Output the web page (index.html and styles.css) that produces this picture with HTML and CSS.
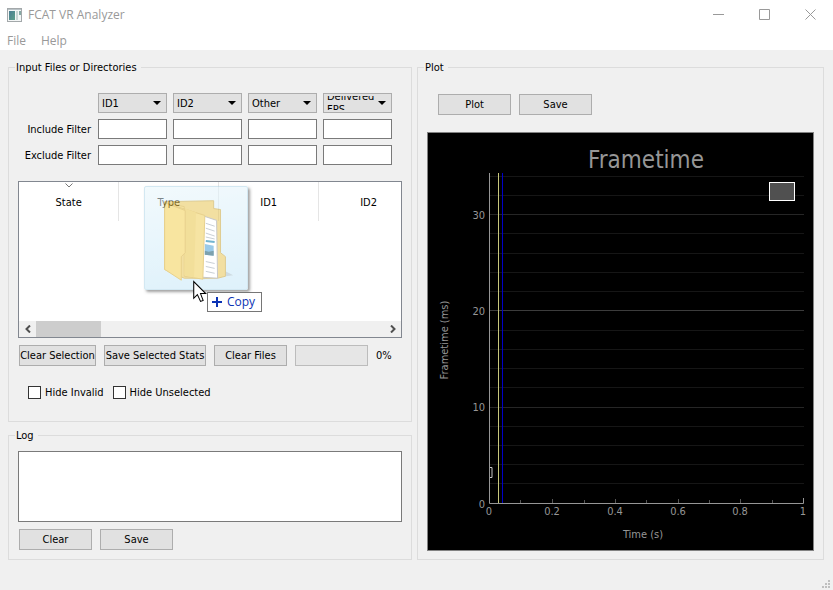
FILE: index.html
```html
<!DOCTYPE html>
<html lang="en">
<head>
<meta charset="utf-8">
<title>FCAT VR Analyzer</title>
<link rel="stylesheet" href="styles.css">
</head>
<body>
<header class="titlebar">
  <svg class="app-icon" width="15" height="14" viewBox="0 0 15 14" aria-hidden="true">
    <defs><linearGradient id="app" x1="0" y1="0" x2="1" y2="1"><stop offset="0" stop-color="#4a7d92"/><stop offset="1" stop-color="#5fa08a"/></linearGradient></defs>
    <rect x=".5" y=".5" width="14" height="13" fill="#f4f6f6" stroke="#a3a8aa"/>
    <path d="M1 1.5h13" stroke="#b9c2c6"/>
    <rect x="2" y="3" width="6" height="9" fill="url(#app)"/>
    <rect x="9" y="3" width="2" height="9" fill="#c9d6d4"/>
    <rect x="12" y="3" width="2" height="4" fill="#86a9a4"/>
  </svg>
  <h1 class="app-title">FCAT VR Analyzer</h1>
  <div class="window-buttons">
    <button type="button" aria-label="Minimize"><svg width="11" height="11"><path d="M0 5.5h11"/></svg></button>
    <button type="button" aria-label="Maximize"><svg width="11" height="11"><path d="M.5.5h10v10H.5z"/></svg></button>
    <button type="button" aria-label="Close"><svg width="11" height="11"><path d="M.5.5l10 10M10.5.5l-10 10"/></svg></button>
  </div>
</header>
<nav class="menubar">
  <button type="button">File</button>
  <button type="button">Help</button>
</nav>

<main class="workspace">
  <div class="column">
    <fieldset class="group inputs">
      <legend>Input Files or Directories</legend>
      <div class="filters">
        <span></span>
        <div class="combo"><select aria-label="First column"><option>ID1</option></select></div>
        <div class="combo"><select aria-label="Second column"><option>ID2</option></select></div>
        <div class="combo"><select aria-label="Third column"><option>Other</option></select></div>
        <div class="combo combo-wrapped"><select aria-label="Fourth column"><option>Delivered FPS</option></select><span class="combo-text" aria-hidden="true"><span>Delivered FPS</span></span></div>
        <label for="inc1">Include Filter</label>
        <input type="text" id="inc1"><input type="text" aria-label="Include ID2"><input type="text" aria-label="Include other"><input type="text" aria-label="Include FPS">
        <label for="exc1">Exclude Filter</label>
        <input type="text" id="exc1"><input type="text" aria-label="Exclude ID2"><input type="text" aria-label="Exclude other"><input type="text" aria-label="Exclude FPS">
      </div>
      <div class="file-list">
        <div class="file-view">
          <table>
            <thead><tr>
              <th scope="col">State<svg class="sort" width="8" height="5" aria-hidden="true"><path d="M.5.5L4 4 7.5.5"/></svg></th>
              <th scope="col">Type</th><th scope="col">ID1</th><th scope="col">ID2</th>
            </tr></thead>
            <tbody></tbody>
          </table>
        </div>
        <div class="scrollbar">
          <button type="button" aria-label="Scroll left"><svg width="6" height="8"><path d="M5 .5L1.500 4 5 7.500"/></svg></button>
          <div class="track"><div class="thumb"></div></div>
          <button type="button" aria-label="Scroll right"><svg width="6" height="8"><path d="M1 .5L4.500 4 1 7.500"/></svg></button>
        </div>
      </div>
      <div class="actions">
        <button type="button" class="btn btn-fit">Clear Selection</button>
        <button type="button" class="btn btn-wide">Save Selected Stats</button>
        <button type="button" class="btn">Clear Files</button>
        <div class="progress" role="progressbar" aria-label="Progress" aria-valuenow="0"></div>
        <span>0%</span>
      </div>
      <div class="checks">
        <label><input type="checkbox">Hide Invalid</label>
        <label><input type="checkbox">Hide Unselected</label>
      </div>
    </fieldset>

    <fieldset class="group log">
      <legend>Log</legend>
      <textarea aria-label="Log"></textarea>
      <div class="actions">
        <button type="button" class="btn">Clear</button>
        <button type="button" class="btn">Save</button>
      </div>
    </fieldset>
  </div>

  <fieldset class="group plot">
    <legend>Plot</legend>
    <div class="actions">
      <button type="button" class="btn">Plot</button>
      <button type="button" class="btn">Save</button>
    </div>
    <div class="chart">
      <svg viewBox="0 0 385 417" role="img" aria-label="Frametime plot">
        <g class="grid-minor">
          <path d="M62 43.500H376M62 62.500H376M62 100.500H376M62 120.500H376M62 139.500H376M62 158.500H376M62 197.500H376M62 216.500H376M62 235.500H376M62 254.500H376M62 293.500H376M62 312.500H376M62 331.500H376M62 350.500H376"/>
        </g>
        <path class="grid-major" d="M62 81.500H376M62 274.500H376"/>
        <path class="grid-mid" d="M62 177.500H376"/>
        <path class="tick" d="M92.500 367v3M156.500 367v3M218.500 367v3M281.500 367v3M344.500 367v3M124.500 366v4M187.500 366v4M250.500 366v4M312.500 366v4"/>
        <path class="axis" d="M61.500 40V370.500H375.500V365"/>
        <path class="line-a" d="M70.500 40V370"/>
        <path class="line-b" d="M74.500 40V370"/>
        <path class="mark" d="M62 334.500h2v10h-2"/>
        <rect class="legend-box" x="341.500" y="49.500" width="25" height="18"/>
        <text class="chart-title" x="218" y="35">Frametime</text>
        <g class="y-labels">
          <text x="57" y="86">30</text><text x="57" y="182">20</text><text x="57" y="278">10</text><text x="57" y="375">0</text>
        </g>
        <g class="x-labels">
          <text x="61" y="382">0</text><text x="124" y="382">0.2</text><text x="187" y="382">0.4</text><text x="250" y="382">0.6</text><text x="312" y="382">0.8</text><text x="375" y="382">1</text>
          <text x="215" y="405">Time (s)</text>
          <text transform="translate(20 207) rotate(-90)">Frametime (ms)</text>
        </g>
      </svg>
    </div>
  </fieldset>
</main>

<footer class="statusbar">
  <svg width="8" height="8" aria-hidden="true"><path d="M6 0h2v2H6zM3 3h2v2H3zM6 3h2v2H6zM0 6h2v2H0zM3 6h2v2H3zM6 6h2v2H6z"/></svg>
</footer>

<div class="drag">
  <svg class="drag-image" width="104" height="104" viewBox="0 0 104 104" aria-hidden="true">
    <path d="M40 92L60 94 90 90 82 86Z" fill="#a9c0cb"/>
    <path d="M20 15L70 14V22L77 23V67L82 71V91L74 93H40L20 84Z" fill="#e8c656" stroke="#c4a136"/>
    <path d="M58 29L73 34 74 93 58 92Z" fill="#fff" stroke="#999"/>
    <path d="M62 37l9 3M62 42l9 3M62 47l9 3M62 51l9 2M62 76l9 2M62 81l9 2M62 86l9 2" stroke="#9ba6b0"/>
    <path d="M62 55l9 1" stroke="#0079ad" stroke-width="2"/>
    <path d="M61 58l9 2v10l-9-1z" fill="#49a0d8"/>
    <path d="M61 65l4 1 5-1v5l-9-1z" fill="#14566c"/>
    <path d="M20 16L61 29 59 94 40 91V20Z" fill="#f0ce58" stroke="#d4ab30"/>
    <path d="M41 22L52 26 50 92 40 90Z" fill="#e9c548"/>
    <path d="M20 16L41 24V67L37 71V95L20 84Z" fill="#f4d054" stroke="#d4ab30"/>
  </svg>
  <svg class="cursor" width="16" height="23" viewBox="0 0 15 22" aria-hidden="true"><path d="M1.500 1.500V17.500L5 14 8 20.500 10.500 19.500 8 13H13Z" fill="#fff" stroke="#000"/></svg>
  <div class="drag-tip"><svg width="10" height="10" aria-hidden="true"><path d="M5 0v10M0 5h10"/></svg>Copy</div>
</div>
</body>
</html>
```

FILE: styles.css
```css
* { box-sizing: border-box; }

body {
  margin: 0;
  min-height: 100vh;
  display: flex;
  flex-direction: column;
  background: #f0f0f0;
  color: #000;
  font: 11px/14px "DejaVu Sans Condensed", "Noto Sans", sans-serif;
}

button, input, select, textarea { font: inherit; color: inherit; margin: 0; }

/* Window frame */
.titlebar {
  display: flex;
  align-items: center;
  height: 30px;
  padding-left: 7px;
  background: #fff;
  color: #999;
}
.app-title {
  flex: 1;
  margin: 0 0 0 6px;
  font: 12px/16px "Open Sans", "Noto Sans", sans-serif;
}
.window-buttons { display: flex; align-self: flex-start; }
.window-buttons button {
  width: 46px;
  height: 28px;
  padding: 0;
  border: 0;
  background: none;
}
.window-buttons svg { display: block; margin: 0 auto; fill: none; stroke: #999; }
.menubar {
  display: flex;
  gap: 15px;
  height: 20px;
  padding-left: 7px;
  background: #fff;
}
.menubar button {
  padding: 0;
  border: 0;
  background: none;
  color: #999;
  font: 12px/22px "Open Sans", "Noto Sans", sans-serif;
}

/* Layout */
.workspace {
  flex: 1;
  display: grid;
  grid-template-columns: minmax(0, 404fr) minmax(0, 407fr);
  gap: 5px;
  padding: 9px 9px 0 8px;
}
.column { display: flex; flex-direction: column; gap: 5px; min-width: 0; }
.group {
  display: flex;
  flex-direction: column;
  min-width: 0;
  margin: 0;
  padding: 0 9px 9px;
  border: 1px solid #dcdcdc;
}
.group legend { margin-left: -3px; padding: 2px 4px 0 1px; }
.inputs { flex: 1; padding-top: 18px; padding-bottom: 21px; }
.log { padding-top: 8px; }
.plot { padding-top: 19px; padding-bottom: 8px; }

/* Filters */
.filters {
  display: grid;
  grid-template-columns: 74px repeat(4, minmax(0, 1fr));
  gap: 6px;
  align-items: center;
  padding-right: 10px;
  margin-bottom: 16px;
}
.filters label { text-align: right; padding: 2px 1px 0 0; }
.filters input {
  width: 100%;
  height: 20px;
  padding: 0 3px;
  border: 1px solid #7a7a7a;
  background: #fff;
}
.combo { position: relative; height: 20px; }
.combo select {
  display: block;
  appearance: none;
  width: 100%;
  height: 20px;
  padding: 2px 18px 0 3px;
  border: 1px solid #adadad;
  border-radius: 0;
  background: #e1e1e1;
}
.combo::after {
  content: "";
  position: absolute;
  top: 8px;
  right: 6px;
  width: 8px;
  height: 4px;
  background: #000;
  clip-path: polygon(0 0, 100% 0, 50% 100%);
  pointer-events: none;
}
.combo-wrapped select { color: transparent; }
.combo-text {
  position: absolute;
  inset: 3px 17px 3px 4px;
  display: flex;
  align-items: center;
  overflow: hidden;
  line-height: 13px;
  pointer-events: none;
}

/* File list */
.file-list {
  flex: 1;
  display: flex;
  flex-direction: column;
  border: 1px solid #828790;
  background: #fff;
}
.file-view { flex: 1; overflow: hidden; }
.file-view table { width: 400px; table-layout: fixed; border-collapse: collapse; }
.file-view th {
  position: relative;
  height: 39px;
  padding: 2px 0 0;
  border-right: 1px solid #e5e5e5;
  font-weight: normal;
}
.sort { position: absolute; top: 1px; left: 46px; fill: none; stroke: #777; }
.scrollbar { display: flex; height: 16px; background: #f0f0f0; }
.scrollbar button {
  display: grid;
  place-items: center;
  width: 17px;
  padding: 0;
  border: 0;
  background: none;
}
.scrollbar svg { fill: none; stroke: #505050; stroke-width: 2; }
.track { flex: 1; }
.thumb { width: 65px; height: 16px; background: #cdcdcd; }

/* Buttons */
.actions { display: flex; align-items: center; gap: 8px; margin-top: 7px; padding-left: 1px; }
.btn {
  width: 73px;
  height: 21px;
  padding: 0;
  border: 1px solid #adadad;
  background: #e1e1e1;
  white-space: nowrap;
}
.btn-fit { width: 77px; }
.btn-wide { width: 102px; }
.progress { width: 73px; height: 21px; border: 1px solid #bcbcbc; background: #e6e6e6; }
.checks { display: flex; gap: 9px; margin-top: 19px; padding-left: 10px; }
.checks label { display: flex; align-items: center; gap: 4px; line-height: 15px; }
.checks input {
  appearance: none;
  width: 13px;
  height: 13px;
  border: 1px solid #333;
  background: #fff;
}

/* Log */
.log textarea {
  display: block;
  width: 100%;
  height: 71px;
  border: 1px solid #7a7a7a;
  background: #fff;
  resize: none;
}

/* Plot */
.plot .actions { margin: 0 0 17px; padding-left: 11px; }
.chart { flex: 1; border: 1px solid #828282; background: #000; }
.chart svg { display: block; width: 100%; height: 100%; }
.chart path { fill: none; }
.chart text { fill: #969696; text-anchor: middle; }
.chart .y-labels text { text-anchor: end; }
.chart .chart-title { font-size: 24px; }
.grid-minor { stroke: #161616; }
.grid-major { stroke: #262626; }
.grid-mid { stroke: #3c3c3c; }
.tick { stroke: #555; }
.axis { stroke: #969696; }
.line-a { stroke: #c8c87d; }
.line-b { stroke: #0000c8; }
.mark { stroke: #c8c8c8; }
.legend-box { fill: #505050; stroke: #fff; }

.statusbar { display: flex; justify-content: flex-end; align-items: flex-end; height: 30px; padding: 0 3px 2px; }
.statusbar svg { fill: #bfbfbf; }

/* Drag feedback floating over the file list */
.drag { position: absolute; top: 186px; left: 144px; pointer-events: none; }
.drag-image {
  display: block;
  border: 1px solid #b0d6e8;
  border-radius: 2px;
  background: linear-gradient(170deg, #e8f6fc, #c4e7f8);
  box-shadow: 2px 2px 3px #555;
  opacity: .55;
}
.cursor { position: absolute; top: 94px; left: 48px; }
.drag-tip {
  position: absolute;
  top: 106px;
  left: 63px;
  display: flex;
  align-items: center;
  gap: 5px;
  height: 20px;
  padding: 0 6px 0 4px;
  border: 1px solid #767676;
  background: #fff;
  color: #0a32b4;
  font: 12px/18px "Open Sans", "Noto Sans", sans-serif;
}
.drag-tip svg { stroke: #0a32b4; stroke-width: 2; }
```
